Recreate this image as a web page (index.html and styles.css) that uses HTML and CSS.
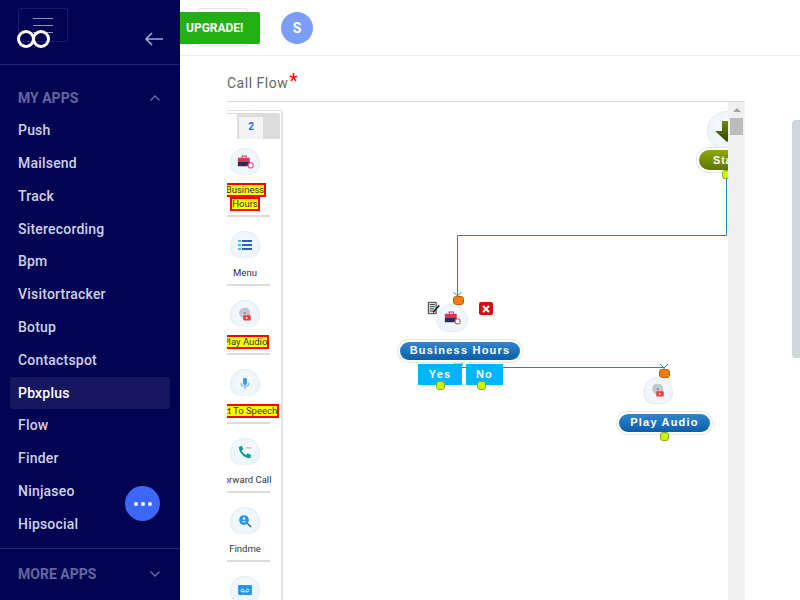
FILE: index.html
```html
<!DOCTYPE html>
<html lang="en">
<head>
    <meta charset="UTF-8">
    <title>Call Flow</title>
    <link rel="stylesheet" href="styles.css">
</head>
<body>
    <div class="app">
        <!-- Sidebar -->
        <aside class="sidebar">
            <div class="side-head">
                <div class="menu-box"><span></span><span></span><span></span></div>
                <svg class="logo" width="36" height="20" viewBox="0 0 36 20"><circle cx="10" cy="10" r="7.5" fill="none" stroke="#fff" stroke-width="3"/><circle cx="25" cy="10" r="7.5" fill="none" stroke="#fff" stroke-width="3"/></svg>
                <svg class="back" width="20" height="14" viewBox="0 0 20 14"><path d="M19 7H2M8 1L2 7l6 6" fill="none" stroke="#a6a8cf" stroke-width="1.6"/></svg>
            </div>
            <div class="group-title first">
                <span>MY APPS</span>
                <svg width="12" height="8" viewBox="0 0 12 8"><path d="M1.500 6.500L6 2l4.500 4.500" fill="none" stroke="#6d6fa8" stroke-width="1.300"/></svg>
            </div>
            <nav class="app-list">
                <a>Push</a>
                <a>Mailsend</a>
                <a>Track</a>
                <a>Siterecording</a>
                <a>Bpm</a>
                <a>Visitortracker</a>
                <a>Botup</a>
                <a>Contactspot</a>
                <a class="active">Pbxplus</a>
                <a>Flow</a>
                <a>Finder</a>
                <a>Ninjaseo</a>
                <a>Hipsocial</a>
            </nav>
            <div class="group-title more">
                <span>MORE APPS</span>
                <svg width="12" height="8" viewBox="0 0 12 8"><path d="M1.500 1.500L6 6l4.500-4.500" fill="none" stroke="#6d6fa8" stroke-width="1.300"/></svg>
            </div>
            <button class="dots"><i></i><i></i><i></i></button>
        </aside>

        <!-- Main content -->
        <main class="content">
            <header class="topbar">
                <div class="ghost-box"></div>
                <a class="upgrade">UPGRADE!</a>
                <div class="avatar">S</div>
            </header>

            <div class="form-area">
                <label class="field-label">Call Flow<span class="req">*</span></label>
                <div class="editor">
                    <div class="palette">
                        <div class="tabs"><span class="tab">2</span></div>

                        <div class="tool">
                            <div class="bubble"><svg width="17" height="14" viewBox="0 0 20 16"><path d="M6 3V1h5v2" fill="none" stroke="#c2325c" stroke-width="1.200"/><rect x="1" y="3" width="14" height="5" fill="#d6395f"/><rect x="1" y="8" width="14" height="5" fill="#2d2a5e"/><circle cx="16" cy="12" r="3" fill="#fff" stroke="#e8486b" stroke-width="1.200"/></svg></div>
                            <div class="tool-name two-line"><span class="flag">Business</span><span class="flag">Hours</span></div>
                        </div>

                        <div class="tool">
                            <div class="bubble"><svg width="14" height="10" viewBox="0 0 14 10"><path d="M0 0h3v2H0zM0 4h3v2H0zM0 8h3v2H0z" fill="#37c5f5"/><path d="M4 0h10v2H4zM4 4h10v2H4zM4 8h10v2H4z" fill="#2b5fc0"/></svg></div>
                            <div class="tool-name">Menu</div>
                        </div>

                        <div class="tool">
                            <div class="bubble"><svg width="15" height="15" viewBox="0 0 20 20"><circle cx="9" cy="8" r="7.500" fill="#c3c8cc"/><circle cx="9" cy="8" r="1.500" fill="#7f8a93"/><rect x="7" y="11" width="10" height="7" rx="1" fill="#ee3c36"/><path d="M10.500 12.800l3 1.700-3 1.700z" fill="#fff"/></svg></div>
                            <div class="tool-name"><span class="flag">Play Audio</span></div>
                        </div>

                        <div class="tool">
                            <div class="bubble"><svg width="10" height="13" viewBox="0 0 12 16"><rect x="3.500" y="1" width="5" height="9" rx="2.500" fill="#3f97ee"/><path d="M1 7c0 3 2 4.500 5 4.500S11 10 11 7M6 11.500V15" fill="none" stroke="#7fbdf5" stroke-width="1.500"/></svg></div>
                            <div class="tool-name"><span class="flag">Text To Speech</span></div>
                        </div>

                        <div class="tool">
                            <div class="bubble"><svg width="15" height="15" viewBox="0 0 18 18"><path d="M1 2.500L4.500 1l2 4-2 1.500c.8 2.500 2.800 4.500 5.500 5.500l1.500-2 4 2L15 16C8 16.500 1 9.500 1 2.500z" fill="#0f9d8a"/><path d="M10 3.500h6" stroke="#5f6b73" stroke-width="1" stroke-dasharray="1.500 1"/></svg></div>
                            <div class="tool-name">Forward Call</div>
                        </div>

                        <div class="tool">
                            <div class="bubble"><svg width="15" height="15" viewBox="0 0 20 20"><path d="M12 12l5.500 5.500" stroke="#5a6670" stroke-width="2"/><circle cx="8" cy="8" r="6.500" fill="#2196f3"/><circle cx="8" cy="6" r="1.700" fill="#fff"/><path d="M4.800 11c.5-2 5.900-2 6.400 0z" fill="#fff"/></svg></div>
                            <div class="tool-name">Findme</div>
                        </div>

                        <div class="tool">
                            <div class="bubble"><svg width="14" height="10" viewBox="0 0 18 13"><rect width="18" height="13" rx="1.500" fill="#2196f3"/><circle cx="5.500" cy="7" r="1.800" fill="none" stroke="#fff"/><circle cx="12.500" cy="7" r="1.800" fill="none" stroke="#fff"/><path d="M5.500 8.800h7" stroke="#fff"/></svg></div>
                        </div>
                    </div>

                    <div class="canvas">
                        <!-- connectors -->
                        <svg class="wires" width="445" height="498" viewBox="0 0 445 498">
                            <path d="M443.500 70V133.500H174.500V194" fill="none" stroke="#1d87c4"/>
                            <path d="M170.500 190l4 4 4-4" fill="none" stroke="#1d87c4"/>
                            <path d="M175 265.500H381V267" fill="none" stroke="#1d87c4"/>
                            <path d="M377 262l4 4 4-4" fill="none" stroke="#1d87c4"/>
                        </svg>

                        <!-- start node -->
                        <div class="node-bubble start-bubble"><svg width="24" height="21" viewBox="0 0 24 21"><defs><linearGradient id="arrow-fill" x1="0" y1="0" x2="0" y2="1"><stop offset="0" stop-color="#6f8a00"/><stop offset="1" stop-color="#344500"/></linearGradient></defs><path d="M7 0h10v10h7L12 21 0 10h7z" fill="url(#arrow-fill)"/></svg></div>
                        <div class="pill green start-pill">Start</div>
                        <i class="port lime start-port"></i>

                        <!-- business hours node -->
                        <i class="port orange bh-in"></i>
                        <svg class="edit-icon" width="14" height="14" viewBox="0 0 16 16"><path d="M1.500 1.500h9v13h-9z" fill="#dfe5e5" stroke="#222"/><path d="M3 4h6M3 6.500h6M3 9h5M3 11.500h4" stroke="#333"/><path d="M7 13l7-8" stroke="#222" stroke-width="1.800"/></svg>
                        <div class="del-icon"><svg width="8" height="8" viewBox="0 0 8 8"><path d="M1 1l6 6M7 1L1 7" stroke="#fff" stroke-width="2"/></svg></div>
                        <div class="node-bubble bh-bubble"><svg width="17" height="14" viewBox="0 0 20 16"><path d="M6 3V1h5v2" fill="none" stroke="#c2325c" stroke-width="1.200"/><rect x="1" y="3" width="14" height="5" fill="#d6395f"/><rect x="1" y="8" width="14" height="5" fill="#2d2a5e"/><circle cx="16" cy="12" r="3" fill="#fff" stroke="#e8486b" stroke-width="1.200"/></svg></div>
                        <i class="port lime bh-out"></i>
                        <div class="pill blue bh-pill">Business Hours</div>
                        <div class="branch yes">Yes</div>
                        <div class="branch no">No</div>
                        <i class="port lime yes-port"></i>
                        <i class="port lime no-port"></i>

                        <!-- play audio node -->
                        <i class="port orange pa-in"></i>
                        <div class="node-bubble pa-bubble"><svg width="15" height="15" viewBox="0 0 20 20"><circle cx="9" cy="8" r="7.500" fill="#c3c8cc"/><circle cx="9" cy="8" r="1.500" fill="#7f8a93"/><rect x="7" y="11" width="10" height="7" rx="1" fill="#ee3c36"/><path d="M10.500 12.800l3 1.700-3 1.700z" fill="#fff"/></svg></div>
                        <div class="pill blue pa-pill">Play Audio</div>
                        <i class="port lime pa-port"></i>
                    </div>

                    <div class="inner-scroll">
                        <span class="arrow-up"></span>
                        <span class="inner-thumb"></span>
                    </div>
                </div>
            </div>
        </main>

        <div class="page-thumb"></div>
    </div>
</body>
</html>
```

FILE: styles.css
```css
/* General */
html, body {
    margin: 0;
    padding: 0;
    height: 100%;
    overflow: hidden;
    background: #fff;
    font-family: Roboto, "Liberation Sans", sans-serif;
}

.app {
    display: flex;
    width: 800px;
    height: 600px;
    overflow: hidden;
}

/* Sidebar */
.sidebar {
    position: relative;
    z-index: 2;
    flex: 0 0 180px;
    display: flex;
    flex-direction: column;
    background: #030354;
    color: #d9d9ea;
}

.side-head {
    position: relative;
    height: 64px;
    border-bottom: 1px solid #25256c;
}

.menu-box {
    position: absolute;
    left: 18px;
    top: 8px;
    width: 50px;
    height: 34px;
    box-sizing: border-box;
    border: 1px solid #1b1b66;
    border-radius: 2px;
    display: flex;
    flex-direction: column;
    align-items: center;
    gap: 6px;
    padding-top: 9px;
}

.menu-box span {
    display: block;
    width: 20px;
    height: 1px;
    background: #8d8db8;
}

.logo {
    position: absolute;
    left: 16px;
    top: 29px;
}

.back {
    position: absolute;
    left: 144px;
    top: 32px;
}

.group-title {
    display: flex;
    justify-content: space-between;
    align-items: center;
    padding: 0 19px 0 18px;
    font-size: 14px;
    font-weight: 700;
    color: #64669f;
}

.group-title.first {
    margin-top: 24px;
    height: 17px;
}

.app-list {
    display: flex;
    flex-direction: column;
    margin-top: 8.2px;
    padding-bottom: 7.4px;
    border-bottom: 1px solid #25256c;
}

.app-list a {
    height: 32.8px;
    line-height: 32.8px;
    padding-left: 8px;
    margin: 0 10px;
    font-size: 14px;
    font-weight: 500;
    letter-spacing: 0.2px;
    color: #cfd0e4;
}

.app-list a.active {
    background: #16165f;
    color: #fff;
    border-radius: 2px;
}

.group-title.more {
    margin-top: 17px;
}

.dots {
    position: absolute;
    left: 125px;
    top: 486px;
    width: 35px;
    height: 35px;
    border: none;
    border-radius: 50%;
    background: #3d68f5;
    display: flex;
    justify-content: center;
    align-items: center;
    gap: 3px;
    padding: 0;
}

.dots i {
    width: 4px;
    height: 4px;
    border-radius: 50%;
    background: #fff;
}

/* Main */
.content {
    flex: 1;
    min-width: 0;
}

.topbar {
    position: relative;
    display: flex;
    align-items: center;
    height: 56px;
    box-sizing: border-box;
    border-bottom: 1px solid #ececec;
}

.ghost-box {
    position: absolute;
    left: 18px;
    top: 8px;
    width: 50px;
    height: 38px;
    box-sizing: border-box;
    border: 1px solid #e6e6e6;
    border-radius: 2px;
}

.upgrade {
    position: relative;
    width: 80px;
    height: 32px;
    box-sizing: border-box;
    padding-left: 6px;
    background: #22b014;
    border-radius: 0 2px 2px 0;
    color: #fff;
    font-size: 12px;
    font-weight: 700;
    line-height: 32px;
}

.avatar {
    width: 32px;
    height: 32px;
    margin-left: 21px;
    border-radius: 50%;
    background: #7c9ef8;
    color: #fff;
    font-size: 14px;
    font-weight: 700;
    line-height: 32px;
    text-align: center;
}

.form-area {
    margin-left: 47px;
    width: 518px;
}

.field-label {
    display: block;
    height: 46px;
    box-sizing: border-box;
    padding-top: 18px;
    border-bottom: 1px solid #dcdcdc;
    color: #666;
    font-size: 14px;
    letter-spacing: 0.5px;
}

.req {
    color: #f00;
    font-size: 20px;
    line-height: 14px;
    margin-left: 1px;
}

/* Flow editor */
.editor {
    display: flex;
    height: 498px;
    overflow: hidden;
}

.palette {
    flex: 0 0 56px;
    box-sizing: border-box;
    height: 490px;
    margin-top: 8px;
    border-right: 2px solid #e2e2e2;
    border-top: 1px solid #e2e2e2;
    border-radius: 0 2px 0 0;
    overflow: hidden;
}

.tabs {
    position: relative;
    width: 53px;
    height: 26px;
    margin-top: 2px;
    margin-bottom: 7px;
    background: #dcdcdc;
    border-radius: 0 2px 0 0;
}

.tabs::before {
    content: "";
    position: absolute;
    left: 0;
    top: 1px;
    width: 10px;
    height: 25px;
    background: #fff;
}

.tab {
    position: absolute;
    left: 12px;
    top: 4px;
    width: 24px;
    height: 22px;
    background: #f4f4f4;
    color: #1a6fd6;
    font-size: 10px;
    font-weight: 700;
    line-height: 20px;
    text-align: center;
}

.tool {
    position: relative;
    width: 43px;
    height: 69px;
    box-sizing: border-box;
    border-bottom: 2px solid #dcdcdc;
}

.tool:nth-of-type(2) {
    height: 71px;
}

.bubble {
    position: absolute;
    left: 3px;
    top: 14px;
    width: 30px;
    height: 27px;
    box-sizing: border-box;
    border-radius: 15px 15px 11px 11px;
    background: radial-gradient(circle at 50% 45%, #f7fbfe, #e9f2fa);
    border: 1px solid #e0ebf4;
    border-bottom: none;
    display: flex;
    justify-content: center;
    align-items: center;
}

.tool:nth-of-type(2) .bubble {
    top: 2px;
}

.tool-name {
    position: absolute;
    left: -18px;
    width: 72px;
    top: 49px;
    text-align: center;
    font-size: 9.5px;
    line-height: 14px;
    color: #333;
    white-space: nowrap;
}

.tool-name.two-line {
    top: 37px;
    display: flex;
    flex-direction: column;
    align-items: center;
}

.flag {
    display: inline-block;
    background: #ffff00;
    border: 2px solid #f00;
    line-height: 10px;
}

.canvas {
    position: relative;
    flex: 0 0 445px;
    overflow: hidden;
}

.wires {
    position: absolute;
    left: 0;
    top: 0;
}

.port {
    position: absolute;
    width: 9px;
    height: 9px;
    border-radius: 3px;
    box-sizing: border-box;
}

.port.lime {
    background: #ccf500;
    border: 1px solid #7fae2c;
}

.port.orange {
    width: 11px;
    height: 9px;
    background: #f07c10;
    border: 1px solid #c45f08;
    border-radius: 3px;
}

.node-bubble {
    position: absolute;
    display: flex;
    justify-content: center;
    align-items: center;
    box-sizing: border-box;
    border-radius: 50%;
    background: radial-gradient(circle at 50% 45%, #f7fbfe, #e9f2fa);
    border: 1px solid #e0ebf4;
}

.pill {
    position: absolute;
    box-sizing: border-box;
    height: 18px;
    border-radius: 9px;
    color: #fff;
    font-family: "Liberation Sans", sans-serif;
    font-size: 11px;
    font-weight: 700;
    letter-spacing: 1.2px;
    line-height: 17px;
    text-align: center;
    white-space: nowrap;
    box-shadow: 0 0 0 2px #fff, 0 0 0 3px #e6e6e6;
}

.pill.blue {
    background: linear-gradient(#2f86cf, #0d5da8);
}

.pill.green {
    background: linear-gradient(#8fa800, #5f7400);
}

.start-bubble {
    left: 424px;
    top: 9px;
    width: 40px;
    height: 40px;
}

.start-pill {
    left: 416px;
    top: 48px;
    width: 60px;
    height: 20px;
    padding-left: 14px;
    border-radius: 10px;
    letter-spacing: 0.8px;
    line-height: 20px;
    text-align: left;
}

.start-port {
    left: 439px;
    top: 68px;
}

.bh-in {
    left: 170px;
    top: 194px;
}

.edit-icon {
    position: absolute;
    left: 144px;
    top: 199px;
}

.del-icon {
    position: absolute;
    left: 196px;
    top: 200px;
    width: 14px;
    height: 13px;
    display: flex;
    justify-content: center;
    align-items: center;
    background: #d40f0f;
    border-radius: 2px;
}

.bh-bubble {
    left: 153px;
    top: 202px;
    width: 32px;
    height: 28px;
    border-radius: 16px 16px 12px 12px;
}

.bh-out {
    left: 171px;
    top: 256px;
}

.bh-pill {
    left: 117px;
    top: 240px;
    width: 120px;
}

.branch {
    position: absolute;
    top: 262px;
    height: 21px;
    background: #00b4ff;
    color: #fff;
    font-family: "Liberation Sans", sans-serif;
    font-size: 11px;
    font-weight: 700;
    letter-spacing: 1.2px;
    line-height: 21px;
    text-align: center;
}

.yes {
    left: 135px;
    width: 44px;
}

.no {
    left: 183px;
    width: 37px;
}

.yes-port {
    left: 153px;
    top: 279px;
}

.no-port {
    left: 194px;
    top: 279px;
}

.pa-in {
    left: 376px;
    top: 267px;
}

.pa-bubble {
    left: 360px;
    top: 275px;
    width: 30px;
    height: 27px;
    border-radius: 15px 15px 11px 11px;
}

.pa-pill {
    left: 336px;
    top: 312px;
    width: 91px;
}

.pa-port {
    left: 377px;
    top: 330px;
}

/* Scrollbars */
.inner-scroll {
    flex: 0 0 17px;
    position: relative;
    background: #f0f0f0;
}

.arrow-up {
    position: absolute;
    left: 5px;
    top: 6px;
    border-left: 4px solid transparent;
    border-right: 4px solid transparent;
    border-bottom: 4px solid #a3a3a3;
}

.inner-thumb {
    position: absolute;
    left: 2px;
    top: 16px;
    width: 13px;
    height: 17px;
    background: #bdbdbd;
}

.page-thumb {
    position: fixed;
    left: 792px;
    top: 120px;
    width: 8px;
    height: 238px;
    background: #cfd6da;
    border-radius: 4px 0 0 4px;
}
```
